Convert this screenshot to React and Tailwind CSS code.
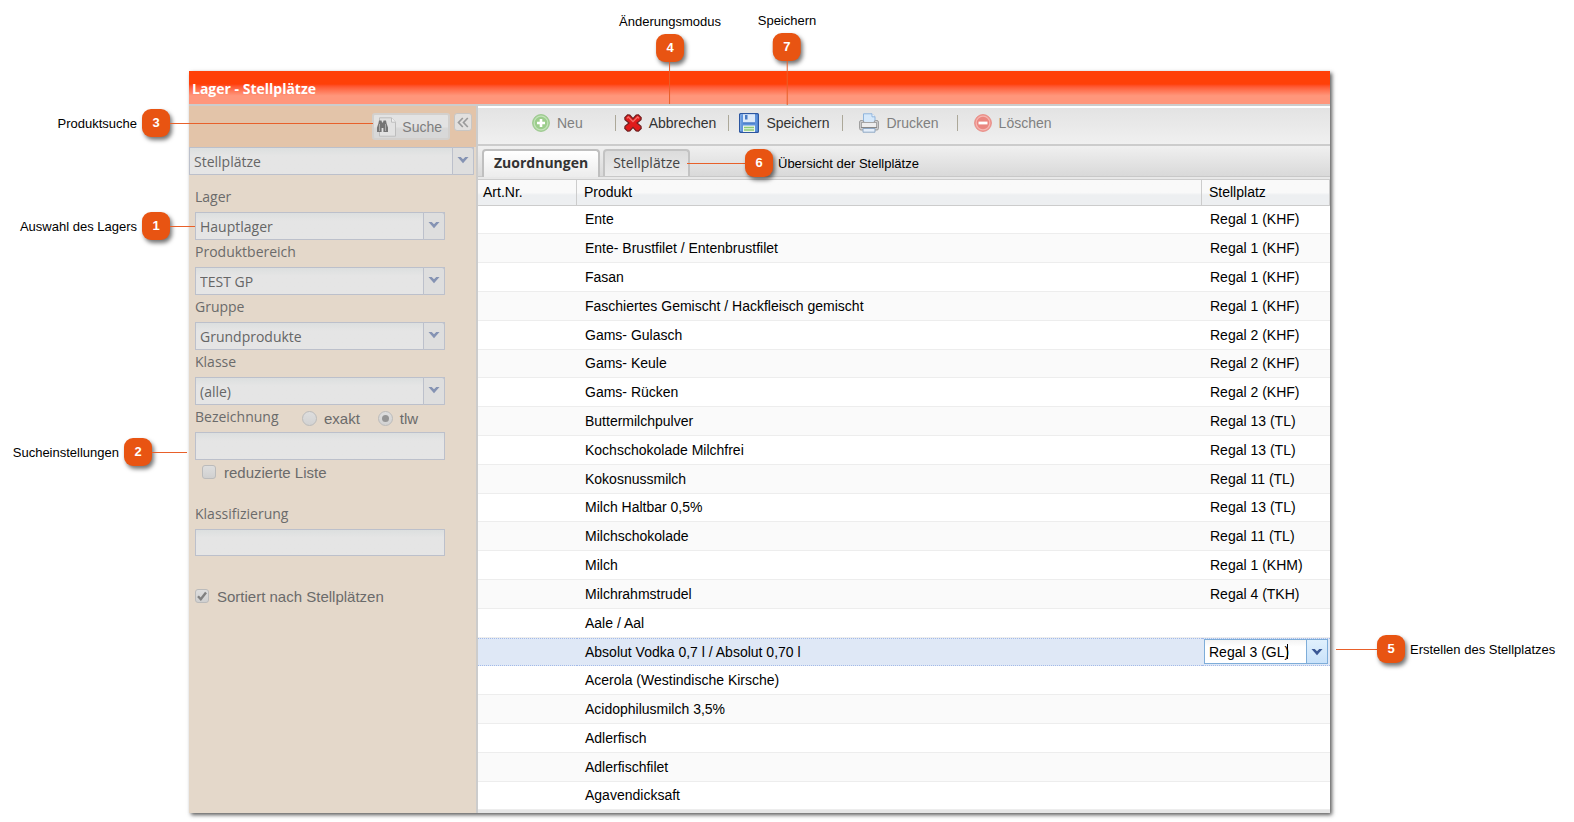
import React from 'react';
import clsx from 'clsx';

const rows = [
  ['Ente', 'Regal 1 (KHF)'],
  ['Ente- Brustfilet / Entenbrustfilet', 'Regal 1 (KHF)'],
  ['Fasan', 'Regal 1 (KHF)'],
  ['Faschiertes Gemischt / Hackfleisch gemischt', 'Regal 1 (KHF)'],
  ['Gams- Gulasch', 'Regal 2 (KHF)'],
  ['Gams- Keule', 'Regal 2 (KHF)'],
  ['Gams- Rücken', 'Regal 2 (KHF)'],
  ['Buttermilchpulver', 'Regal 13 (TL)'],
  ['Kochschokolade Milchfrei', 'Regal 13 (TL)'],
  ['Kokosnussmilch', 'Regal 11 (TL)'],
  ['Milch Haltbar 0,5%', 'Regal 13 (TL)'],
  ['Milchschokolade', 'Regal 11 (TL)'],
  ['Milch', 'Regal 1 (KHM)'],
  ['Milchrahmstrudel', 'Regal 4 (TKH)'],
  ['Aale / Aal', ''],
  ['Absolut Vodka 0,7 l / Absolut 0,70 l', 'Regal 3 (GL)'],
  ['Acerola (Westindische Kirsche)', ''],
  ['Acidophilusmilch 3,5%', ''],
  ['Adlerfisch', ''],
  ['Adlerfischfilet', ''],
  ['Agavendicksaft', ''],
];

const SELECTED = 15;

const filters = [
  { id: 'lager', label: 'Lager', value: 'Hauptlager' },
  { id: 'bereich', label: 'Produktbereich', value: 'TEST GP' },
  { id: 'gruppe', label: 'Gruppe', value: 'Grundprodukte' },
  { id: 'klasse', label: 'Klasse', value: '(alle)' },
];

/* ---------- icons ---------- */

const AddIcon = () => (
  <svg width="18" height="18" viewBox="0 0 18 18">
    <circle cx="9" cy="9" r="8.4" fill="#a3d095" stroke="#9cc98e" />
    <circle cx="9" cy="9" r="6.8" fill="#9ccd8c" stroke="#c2e2b9" strokeWidth="1.2" />
    <path d="M9 5v8M5 9h8" stroke="#fff" strokeWidth="2.6" />
  </svg>
);

const CancelIcon = () => (
  <svg width="18" height="18" viewBox="0 0 18 18">
    <path
      d="M.8 3.600 3.600.8l2.200.2L9 4.600 12.200 1l2.200-.2 2.800 2.800-.2 2.100L13 9l4 3.400.2 2.100-2.800 2.700-2.200-.2L9 13.400 5.800 17l-2.200.2L.8 14.500l.2-2.100L5 9 1 5.700z"
      fill="#e01b1b"
      stroke="#6e2020"
      strokeWidth="1.200"
    />
    <path d="M3 4.400 4.300 3 9 7.600 13.700 3 15 4.400" fill="none" stroke="#f4706a" strokeWidth="1.300" />
  </svg>
);

const SaveIcon = () => (
  <svg width="20" height="20" viewBox="0 0 20 20">
    <rect x=".6" y=".6" width="18.800" height="18.800" rx="1" fill="#5e93dc" stroke="#2c56a0" strokeWidth="1.200" />
    <path d="M1.700 18V1.700h2" fill="none" stroke="#86b1ea" />
    <rect x="4" y="1.200" width="12" height="8.300" fill="#dce9f9" />
    <rect x="6" y="2" width="2.500" height="4.500" fill="#4a7cc4" />
    <path d="M4 10h12" stroke="#3f71bd" />
    <rect x="4" y="12.500" width="12" height="6.500" fill="#eef6ea" />
    <path d="M5 14.500h10M5 17h10" stroke="#8ccb75" strokeWidth="1.500" />
  </svg>
);

const PrintIcon = () => (
  <svg width="20" height="20" viewBox="0 0 20 20">
    <path d="M4.500 10V.8h8.500l3 3V10z" fill="#d5e8fa" stroke="#8fb4dc" />
    <path d="M13 .8v3h3" fill="#fff" stroke="#8fb4dc" />
    <rect x=".6" y="7.500" width="4.200" height="9.500" rx="1.500" fill="#cfcfcf" stroke="#9a9a9a" />
    <rect x="15.200" y="7.500" width="4.200" height="9.500" rx="1.500" fill="#cfcfcf" stroke="#9a9a9a" />
    <rect x="2.500" y="9.500" width="15" height="5" fill="#ededed" stroke="#a5a5a5" />
    <path d="M2 14.500h16" stroke="#888" />
    <path d="M4 15.500h12v3.700H4z" fill="#e4eefa" stroke="#8fa8c4" />
  </svg>
);

const DeleteIcon = () => (
  <svg width="18" height="18" viewBox="0 0 18 18">
    <circle cx="9" cy="9" r="8.4" fill="#ee938c" stroke="#e89089" />
    <circle cx="9" cy="9" r="6.800" fill="#ea8680" stroke="#f5b5b0" strokeWidth="1.2" />
    <path d="M4.500 9h9" stroke="#fff" strokeWidth="2.800" />
  </svg>
);

const SearchIcon = () => (
  <svg width="21" height="20" viewBox="0 0 21 20">
    <path d="M3.500.8h12l4 4.400v14h-16z" fill="#e2e2e2" stroke="#bdbdbd" />
    <path d="M15.500.8v4.400h4" fill="#efefef" stroke="#bdbdbd" />
    <path d="M3 3.500h2.500l.5 2h1l.5-2H10l.6 3 1.400 4v4.500H7.400V11h-1.800v4H1v-4.500l1.400-4z" fill="#757575" />
    <path d="M3.500 7v7M9.500 7v7" stroke="#a9a9a9" />
  </svg>
);

const CollapseIcon = () => (
  <svg width="12" height="11" viewBox="0 0 12 11" fill="none" stroke="#9b9b9b" strokeWidth="1.700">
    <path d="M5.800 1 1.500 5.500l4.300 4.500M10.800 1 6.500 5.500l4.300 4.500" />
  </svg>
);

const Chevron = ({ color }) => (
  <svg width="12" height="8" viewBox="0 0 12 8">
    <path d="M.500 1h3.200L6 3.200 8.300 1h3.200L6 7.200z" fill={color} />
  </svg>
);

const CheckMark = () => (
  <svg className="pointer-events-none absolute left-[2px] top-[2px]" width="10" height="10" viewBox="0 0 10 10">
    <path d="M1 5.200 3.800 8.200 9 1.500" fill="none" stroke="#808080" strokeWidth="2.400" />
  </svg>
);

/* ---------- building blocks ---------- */

const fieldBg = 'border border-[#bcc0cb] bg-linear-to-b from-[#dcdfdf] to-[#e5e5e5] to-30%';

const Combo = ({ id, value, label }) => (
  <div className="relative">
    <select
      id={id}
      aria-label={label}
      className={clsx('block h-7 w-full appearance-none pl-1 pt-[2px] text-sm text-[#666]', fieldBg)}
    >
      <option>{value}</option>
    </select>
    <span className="pointer-events-none absolute inset-y-0 right-0 flex w-[22px] items-center justify-center rounded-tr-[3px] border border-[#bcc0cb] bg-[#dedede] pb-[2px]">
      <Chevron color="#8593b3" />
    </span>
  </div>
);

const Check = ({ id, label, checked, className }) => (
  <div className={clsx('flex items-center', className)}>
    <span className="relative flex">
      <input
        id={id}
        type="checkbox"
        defaultChecked={checked}
        className="size-[14px] appearance-none rounded-[3px] border border-[#bbb] bg-linear-to-b from-[#dedede] to-[#d0d0d0]"
      />
      {checked && <CheckMark />}
    </span>
    <label htmlFor={id} className="pl-2 pt-[2px] font-['Liberation_Sans',Arial,sans-serif] text-[15px] leading-6">{label}</label>
  </div>
);

const Radio = ({ id, label, checked }) => (
  <div className="flex items-center">
    <span className="relative flex">
      <input
        id={id}
        type="radio"
        name="match"
        defaultChecked={checked}
        className="size-[15px] appearance-none rounded-full border border-[#bbb] bg-linear-to-b from-[#dedede] to-[#d2d2d2]"
      />
      {checked && <span className="pointer-events-none absolute inset-1 rounded-full bg-[#959595]" />}
    </span>
    <label htmlFor={id} className="pl-[7px] pt-[2px] font-['Liberation_Sans',Arial,sans-serif] text-[15px] leading-6">{label}</label>
  </div>
);

const ToolButton = ({ icon, label, active, className }) => (
  <button type="button" className={clsx('flex items-center gap-[7px] text-sm', active ? 'text-[#333]' : 'text-[#808080]', className)}>
    {icon}
    {label}
  </button>
);

const Separator = ({ className }) => <span className={clsx('h-4 w-px bg-[#aca899]', className)} />;

const Badge = ({ n }) => (
  <span className="flex size-7 shrink-0 items-center justify-center rounded-[9px] bg-[#e85412] text-[13px] font-bold text-white shadow-[2px_3px_4px_rgba(0,0,0,0.55)]">
    {n}
  </span>
);

const Line = ({ className }) => <span className={clsx('shrink-0 bg-[#e8602a]', className)} />;

const Callout = ({ className, children }) => (
  <div className={clsx('pointer-events-none absolute flex items-center whitespace-nowrap text-[13px] leading-5 text-black', className)}>
    {children}
  </div>
);

/* ---------- panels ---------- */

const Sidebar = () => (
  <aside className="w-[289px] shrink-0 border-r-2 border-[#ccc] bg-[#e4d8ca] font-['Open_Sans',Tahoma,sans-serif] text-sm text-[#6b6b6b]">
    <div className="flex h-[41px] items-start justify-end gap-1 bg-[#e3c4a9] pr-1 pt-[7px]">
      <button
        type="button"
        className="flex h-[27px] items-center gap-[5px] rounded-[3px] border-2 border-[#d3d0cd] bg-linear-to-b from-[#e3e3e3] from-50% to-[#d8d8d8] to-60% pl-[2px] pr-[6px] font-['Liberation_Sans',Arial,sans-serif] text-[#7d7d7d]"
      >
        <SearchIcon />
        Suche
      </button>
      <button type="button" aria-label="Einklappen" className="flex size-[18px] items-center justify-center rounded-[3px] border border-[#c9c6c3] bg-[#e2e0de]">
        <CollapseIcon />
      </button>
    </div>
    <div className="pr-[2px]">
      <Combo id="ansicht" label="Ansicht" value="Stellplätze" />
    </div>

    <form className="w-[256px] pl-[6px] pt-[10px]">
      {filters.map((f) => (
        <div key={f.id}>
          <label htmlFor={f.id} className="block h-[27px] leading-6">{f.label}</label>
          <Combo id={f.id} value={f.value} />
        </div>
      ))}
      <div className="flex h-[27px] items-start">
        <label htmlFor="bezeichnung" className="w-[107px] leading-6">Bezeichnung</label>
        <Radio id="exakt" label="exakt" />
        <span className="w-[18px]" />
        <Radio id="tlw" label="tlw" checked />
      </div>
      <input id="bezeichnung" type="text" className={clsx('block h-7 w-full px-1', fieldBg)} />
      <Check id="reduziert" label="reduzierte Liste" className="h-6 pl-[7px]" />
      <label htmlFor="klassifizierung" className="mt-[18px] block h-[27px] leading-6">Klassifizierung</label>
      <input id="klassifizierung" type="text" className={clsx('block h-[27px] w-full px-1', fieldBg)} />
      <Check id="sortiert" label="Sortiert nach Stellplätzen" checked className="mt-7 h-6" />
    </form>
  </aside>
);

const Toolbar = () => (
  <div className="flex h-[38px] items-center border-b-2 border-[#ccc] bg-linear-to-b from-[#e3e3e3] to-[#f0f0f0] pb-[6px]">
    <ToolButton icon={<AddIcon />} label="Neu" className="ml-[54px]" />
    <Separator className="ml-8 mr-2" />
    <ToolButton icon={<CancelIcon />} label="Abbrechen" active />
    <Separator className="ml-3 mr-[10px]" />
    <ToolButton icon={<SaveIcon />} label="Speichern" active />
    <Separator className="ml-[13px] mr-4" />
    <ToolButton icon={<PrintIcon />} label="Drucken" />
    <Separator className="ml-[18px] mr-4" />
    <ToolButton icon={<DeleteIcon />} label="Löschen" />
  </div>
);

const Tabs = () => (
  <div className="border-b border-[#ccc] bg-[#e8e8e8] pb-[2px]">
    <div className="flex h-[31px] items-end gap-[3px] border-b border-[#c8c8c8] bg-linear-to-b from-[#f0f0f0] to-[#d9d9d9] pl-1 font-['Open_Sans',Tahoma,sans-serif] text-sm">
      <button type="button" className="-mb-px h-7 rounded-t-[4px] border-2 border-b-0 border-[#bfbfbf] bg-linear-to-b from-white to-[#ececec] px-[10px] pb-[2px] font-bold text-[#333]">
        Zuordnungen
      </button>
      <button type="button" className="h-[27px] rounded-t-[4px] border-2 border-b-0 border-[#c3c3c3] bg-linear-to-b from-[#dcdcdc] to-[#ebebeb] px-2 pb-[2px] text-[#444]">
        Stellplätze
      </button>
    </div>
  </div>
);

const PlaceEditor = ({ value }) => (
  <div className="relative mr-[2px] flex h-[25px] border border-[#7eadd9] bg-white">
    <input
      type="text"
      aria-label="Stellplatz"
      defaultValue={value}
      className="min-w-0 flex-1 bg-linear-to-b from-[#f3f3f3] to-white to-30% pl-1 text-sm"
    />
    <span className="pointer-events-none absolute left-[82px] top-1 h-[15px] w-px bg-black" />
    <button type="button" aria-label="Auswahl öffnen" className="flex w-[21px] items-center justify-center border-l border-[#7eadd9] bg-linear-to-b from-[#e0f0fd] to-[#c9e2fa]">
      <Chevron color="#3a5795" />
    </button>
  </div>
);

const headCell = 'h-[26px] border-b border-[#ccc] bg-linear-to-b from-[#f9f9f9] from-50% to-[#edeff1] to-60% p-0 pb-px text-left font-normal';

const Grid = () => (
  <table className="w-full table-fixed border-separate border-spacing-0 bg-white text-sm text-black">
    <colgroup>
      <col className="w-[99px]" />
      <col />
      <col className="w-[128px]" />
    </colgroup>
    <thead>
      <tr>
        <th className={clsx(headCell, 'border-r pl-[5px]')}>Art.Nr.</th>
        <th className={clsx(headCell, 'border-r pl-[7px]')}>Produkt</th>
        <th className={clsx(headCell, 'border-r pl-[7px]')}>Stellplatz</th>
      </tr>
    </thead>
    <tbody className="[&>tr]:h-[29px] [&>tr:nth-child(5n+1)]:h-7">
      {rows.map(([product, place], i) => {
        const selected = i === SELECTED;
        const cell = clsx(
          'border-b p-0',
          selected ? 'border-t border-dotted border-[#a3bae9]' : 'border-[#ededed] pb-px'
        );
        return (
          <tr key={product} className={clsx(selected ? 'bg-[#dfe8f6]' : i % 2 && 'bg-[#fafafa]')}>
            <td className={cell} />
            <td className={clsx(cell, 'pl-2')}>{product}</td>
            <td className={clsx(cell, selected ? 'pl-[2px] align-top' : 'pl-2')}>
              {selected ? <PlaceEditor value={place} /> : place}
            </td>
          </tr>
        );
      })}
    </tbody>
  </table>
);

export default function App() {
  return (
    <main className="min-h-screen bg-white pb-[9px] pl-[189px] pr-[244px] pt-[71px] font-['Liberation_Sans',Arial,sans-serif]">
      <div className="relative shadow-[2px_2px_4px_rgba(0,0,0,0.65)]">
        <header className="flex h-[35px] items-center border-b-2 border-[#ccc] bg-linear-to-b from-[#ff4008] from-40% to-[#ff967b] to-75% pl-[3px] pt-[3px] font-['Open_Sans',Tahoma,sans-serif] text-sm font-bold text-white">
          <h1>Lager - Stellplätze</h1>
        </header>
        <div className="flex">
          <Sidebar />
          <section className="min-w-0 flex-1 border-b-[3px] border-[#e6e6e6] bg-white pt-[2px]">
            <Toolbar />
            <Tabs />
            <Grid />
          </section>
        </div>

        <Callout className="right-full top-[38px] -mr-[184px]">
          <span className="pr-[5px] pt-[2px]">Produktsuche</span>
          <Badge n="3" />
          <Line className="h-px w-[203px]" />
        </Callout>
        <Callout className="right-full top-[141px] -mr-[6px]">
          <span className="pr-[5px] pt-[2px]">Auswahl des Lagers</span>
          <Badge n="1" />
          <Line className="h-px w-[25px]" />
        </Callout>
        <Callout className="right-full top-[367px] mr-[2px]">
          <span className="pr-[5px] pt-[2px]">Sucheinstellungen</span>
          <Badge n="2" />
          <Line className="h-px w-[35px]" />
        </Callout>
        <Callout className="-top-[59px] left-[481px] -translate-x-1/2 flex-col">
          <span className="pb-[2px]">Änderungsmodus</span>
          <Badge n="4" />
          <Line className="h-[42px] w-px" />
        </Callout>
        <Callout className="-top-[60px] left-[598px] -translate-x-1/2 flex-col">
          <span className="pb-[2px]">Speichern</span>
          <Badge n="7" />
          <Line className="h-[44px] w-px" />
        </Callout>
        <Callout className="left-[498px] top-[78px]">
          <Line className="h-px w-[58px]" />
          <Badge n="6" />
          <span className="pl-[5px] pt-[2px]">Übersicht der Stellplätze</span>
        </Callout>
        <Callout className="left-full top-[564px] ml-[6px]">
          <Line className="h-px w-[41px]" />
          <Badge n="5" />
          <span className="pl-[5px] pt-[2px]">Erstellen des Stellplatzes</span>
        </Callout>
      </div>
    </main>
  );
}
